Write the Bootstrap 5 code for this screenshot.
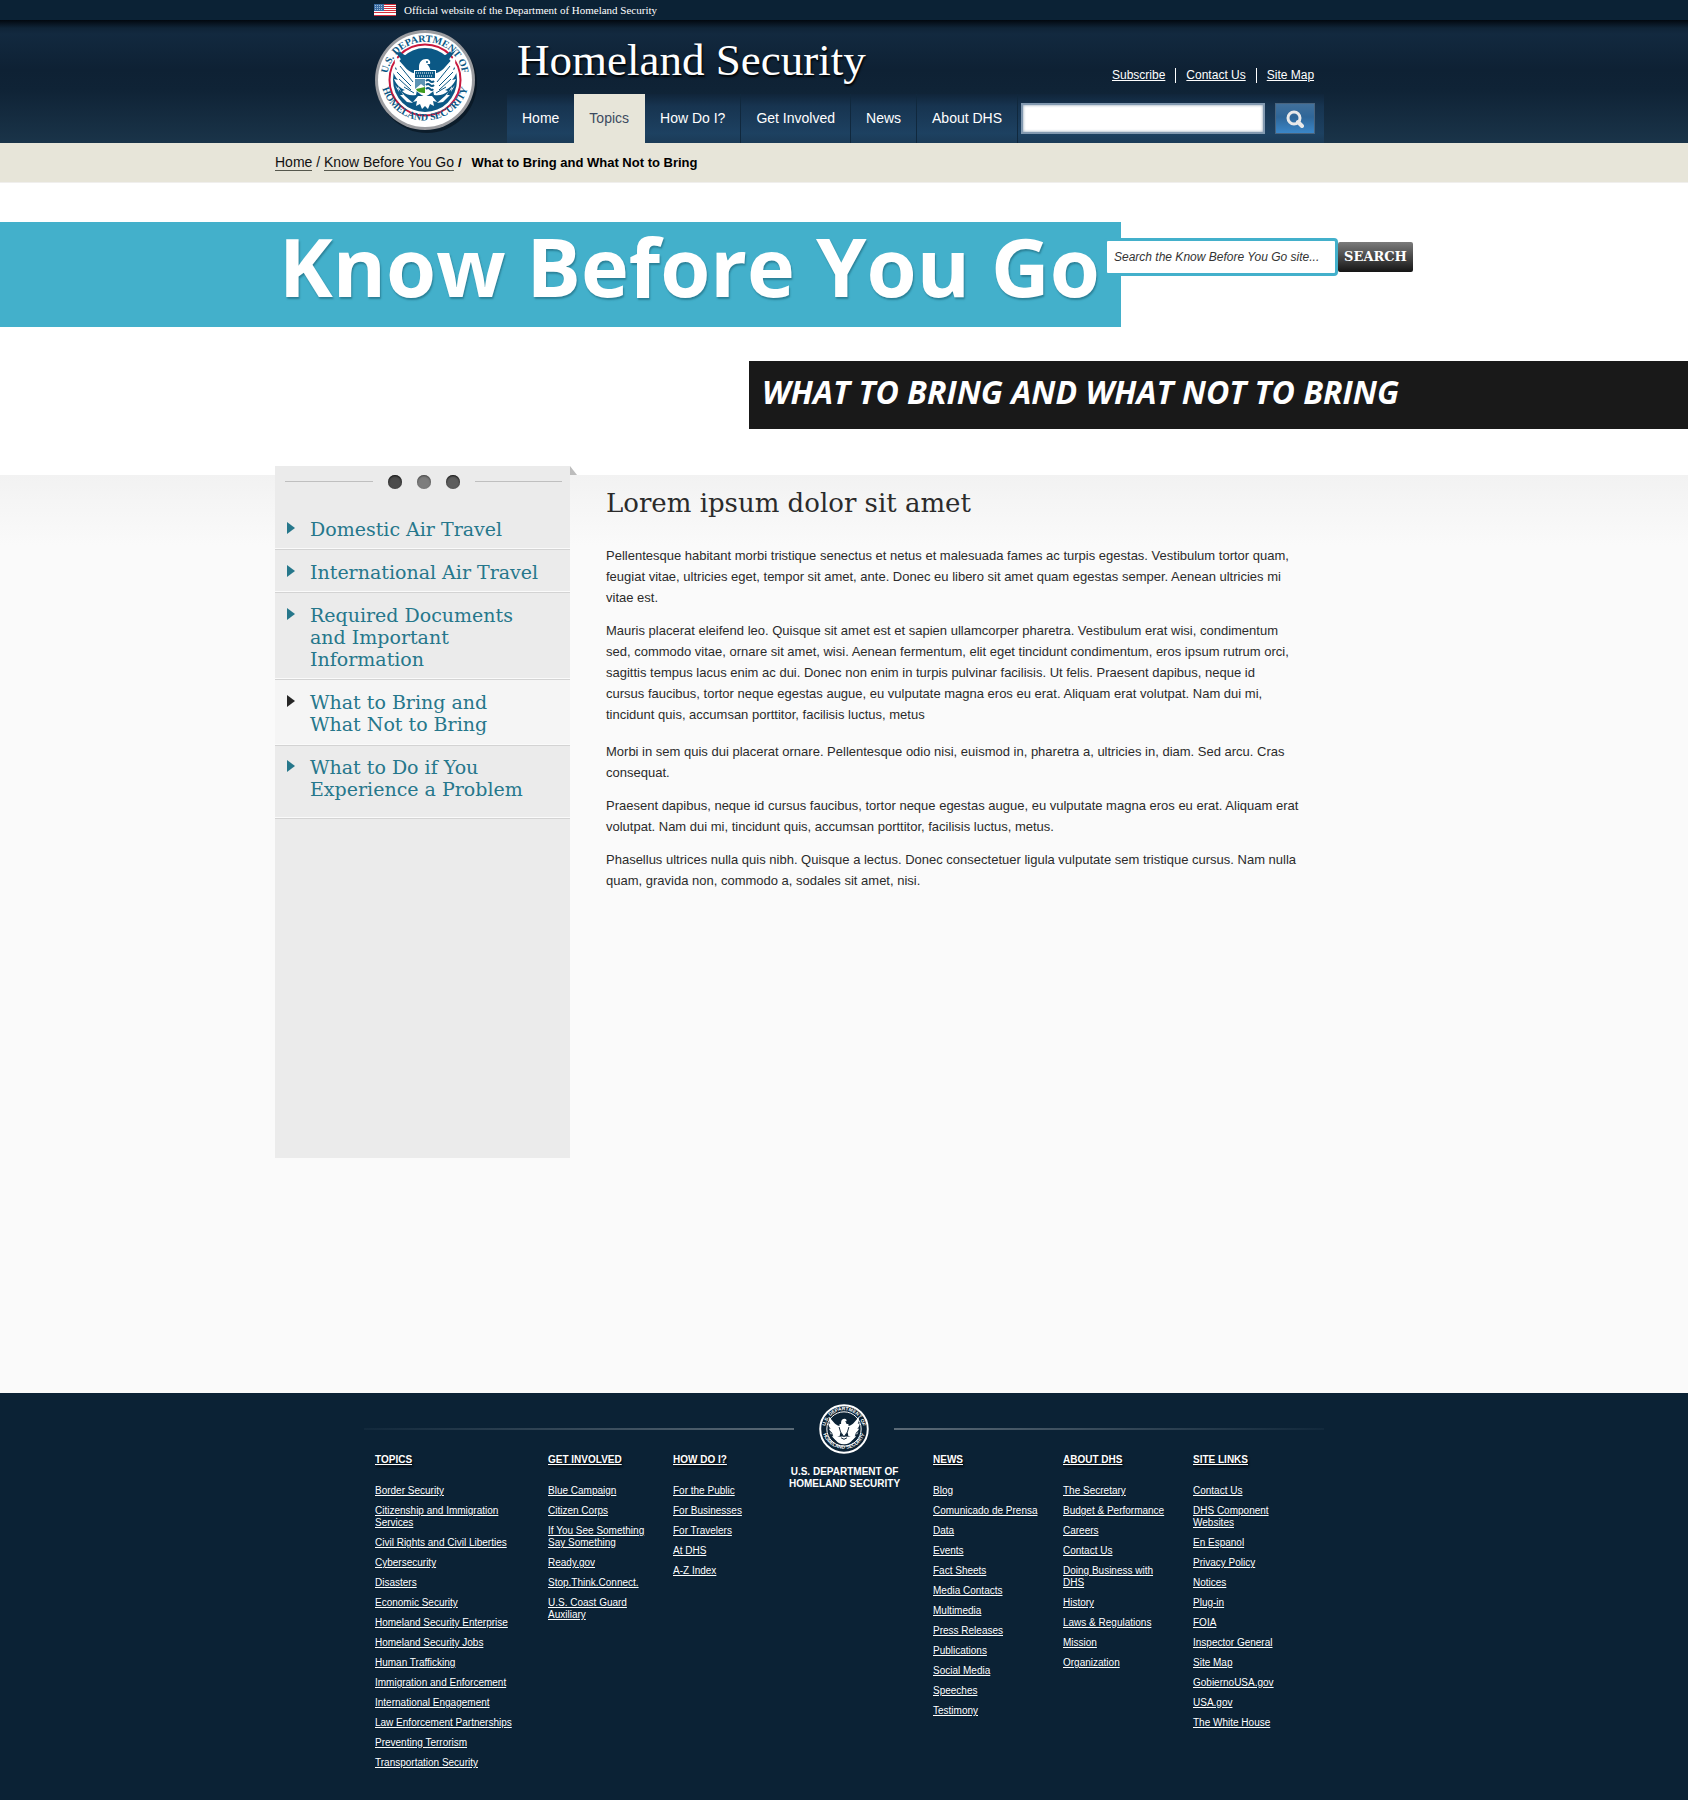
<!DOCTYPE html>
<html lang="en">
<head>
<meta charset="utf-8">
<meta name="viewport" content="width=device-width, initial-scale=1">
<title>What to Bring and What Not to Bring | Homeland Security</title>
<link href="https://cdn.jsdelivr.net/npm/bootstrap@5.3.0/dist/css/bootstrap.min.css" rel="stylesheet">
<style>
  :root { --navy: #0b2235; --sand: #e7e5d9; --aqua: #43b0cb; --link: #26778b; --slab: "DejaVu Serif", serif; }
  body { font-family: "Liberation Sans", Arial, sans-serif; font-size: 13px; line-height: 21px; color: #2b2b2b; background: #fff; }
  .shell { width: 100%; max-width: 960px; margin: 0 auto; }
  .wide-shell { width: 100%; max-width: 1138px; margin: 0 auto; }

  /* Official strip and masthead */
  .official { background: var(--navy); height: 20px; }
  .official p { font: 11px/20px "Liberation Serif", serif; color: #fff; padding-left: 10px; }
  .masthead { background: linear-gradient(#02080f 0, #0f2437 8px, #12293f 14px, #0e2134 50px, #0f2336 70px, #1a3449 100%); }
  .seal-link { width: 143px; padding: 9px 0 0 10px; }
  .site-name { font: 45px/54px "Liberation Serif", serif; color: #fff; padding-left: 10px; text-shadow: 1px 2px 2px #000; }
  .site-name a { color: inherit; text-decoration: none; }
  .brand-row { height: 74px; padding-top: 13px; }
  .util a { color: #fff; font-size: 12px; line-height: 15px; padding: 0 10px; display: block; border-left: 1px solid #fff; }
  .util li:first-child a { border-left: 0; }
  .util { margin: 35px 0 0; }
  .main-nav { min-height: 49px; background: linear-gradient(#10253a 0, #173450 12px, #1d4161 80%, #1b3b57 100%); }
  .main-nav .nav-link { font-size: 14px; line-height: 49px; padding: 0 15px; color: #fff; border-right: 1px solid #10283d; }
  .main-nav .nav-link.active { background: var(--sand); color: #3c4a60; border-color: var(--sand); }
  .site-search { padding: 9px 9px 9px 3px; gap: 10px; }
  .site-search input { width: 244px; height: 31px; border: 2px solid #8299b0; border-radius: 0; padding: 2px 6px; box-shadow: inset 0 0 3px #7d93a8; }
  .site-search button { width: 40px; height: 31px; border: 1px solid #49647e; border-radius: 0; padding: 0; background: linear-gradient(#41709b, #2f6698 45%, #3a86c8); }
  .site-search svg { display: block; margin: 0 auto; }

  /* Breadcrumb */
  .crumbs { background: var(--sand); border-bottom: 1px solid #f0efed; font-size: 14px; line-height: 38px; color: #111; }
  .crumbs a { color: #111; text-decoration: none; border-bottom: 1px solid #55574d; }
  .crumbs strong { font-size: 13px; color: #000; padding-left: 6px; }

  /* Section banners */
  .hero { margin-top: 39px; height: 105px; background: linear-gradient(to right, var(--aqua) calc(50% + 277px), transparent 0); }
  .hero h1 { font: bold 81px/88px "Open Sans", sans-serif; color: #fff; width: 829px; white-space: nowrap; text-shadow: 1px 2px 2px #2b8097; }
  .hero form { margin-top: 16px; }
  .hero input { width: 234px; height: 38px; border: 3px solid var(--aqua); border-radius: 4px; padding: 0 7px; font-size: 12px; font-style: italic; color: #333; }
  .hero input::placeholder { color: #333; opacity: 1; }
  .hero button { width: 75px; height: 30px; border: 0; border-radius: 2px; padding: 0; font: bold 13px/28px var(--slab); color: #fff; background: linear-gradient(#7b7b7b, #151515); }
  .subhero { margin: 34px 0 46px calc(50% - 95px); height: 68px; background: #191919; }
  .subhero h2 { font: italic bold 32px/62px "Open Sans", sans-serif; color: #fff; padding-left: 13px; white-space: nowrap; }

  /* Body */
  .page-body { background: linear-gradient(#f2f2f2, #fafafa 70px); min-height: 918px; }
  .side { position: relative; width: 295px; min-height: 692px; margin-top: -9px; background: #ebebeb; }
  .side::after { content: ""; position: absolute; left: 100%; top: 0; border-style: solid; border-width: 9px 0 0 7px; border-color: transparent transparent transparent #bdbdbd; }
  .dots { height: 31px; padding: 0 8px 0 10px; gap: 15px; }
  .dots i { flex: 1; height: 1px; background: #bfbfbf; }
  .dots b { width: 14px; height: 14px; border-radius: 50%; background: #4c4c4c; box-shadow: inset 0 1px 2px #111; }
  .dots b:nth-of-type(2) { background: #7d7d7d; box-shadow: inset 0 1px 2px #444; }
  .dots b:nth-of-type(3) { background: #5d5d5d; }
  .side ul { margin: 10px 0 0; }
  .side li { border-bottom: 1px solid #d3d3d3; box-shadow: inset 0 -1px #fafafa; }
  .side li a { display: flex; gap: 15px; padding: 11px 30px 9px 12px; font: 19px/22px var(--slab); color: var(--link); text-decoration: none; }
  .side li a::before { content: ""; flex: none; margin-top: 4px; height: 0; border-style: solid; border-width: 6px 0 6px 8px; border-color: transparent transparent transparent var(--link); }
  .side li.current { background: #f5f5f5; }
  .side li.current a { padding-bottom: 10px; }
  .side li.current a::before { border-left-color: #262626; }
  .side li.closing a { padding: 10px 30px 18px 12px; }
  .side .nw { white-space: nowrap; }
  .copy { max-width: 733px; padding: 10px 0 40px 36px; }
  .copy h3 { font: 26px/36px var(--slab); color: #2b2b2b; margin: 0 0 24px; }
  .copy p { margin: 0 0 12px; }
  .copy .break-after { margin-bottom: 16px; }

  /* Footer */
  .foot { background: var(--navy); min-height: 407px; padding: 11px 0 20px; }
  .rule { height: 2px; background: linear-gradient(to right, #12293c, #5b6a76); }
  .rule.flip { background: linear-gradient(to left, #12293c, #5b6a76); }
  .foot-seal { width: 100px; }
  .foot-cols { padding-left: 11px; font-size: 10px; line-height: 12px; }
  .foot-cols a { color: #fff; }
  .foot-cols h4 { font-size: 10px; font-weight: bold; line-height: 12px; margin: 0 0 19px; text-shadow: 1px 2px 2px #000; }
  .foot-cols li { margin-bottom: 8px; }
  .fc-topics { width: 173px; padding-right: 25px; }
  .fc-involved { width: 125px; padding-right: 15px; }
  .fc-how { width: 116px; }
  .fc-dept { width: 111px; margin-right: 33px; margin-top: 12px; color: #fff; font-weight: bold; text-align: center; white-space: nowrap; }
  .fc-right { width: 130px; padding-right: 25px; }
</style>
<script src="https://cdn.jsdelivr.net/npm/bootstrap@5.3.0/dist/js/bootstrap.bundle.min.js"></script>
</head>
<body>
<div class="official">
  <div class="shell">
    <p class="m-0 d-flex align-items-center">
      <svg class="me-2" width="22" height="12" viewBox="0 0 22 12" aria-hidden="true">
        <rect width="22" height="12" fill="#fff"/>
        <path d="M0 .5h22M0 2.5h22M0 4.5h22M0 6.5h22M0 8.5h22M0 11.5h22" stroke="#d22f3c"/>
        <rect width="10" height="7" fill="#3c6ea5"/>
        <path d="M1 1.500h8M1 3.500h8M1 5.500h8" stroke="#9dbbd8" stroke-dasharray="1 1"/>
      </svg>Official website of the Department of Homeland Security</p>
  </div>
</div>

<header class="masthead">
  <div class="shell d-flex">
    <a class="seal-link flex-shrink-0" href="#" aria-label="Department of Homeland Security">
      <svg width="106" height="106" viewBox="-1 -1 106 106" aria-hidden="true">
        <defs>
          <path id="arcTopWide" d="M12.500 56a38 38 0 1 1 75 0"/>
          <path id="arcLow" d="M5.500 46a44.500 44.500 0 1 0 89 0"/>
          <g id="eagle">
            <path d="M45 43C39 45 33 41 29 36C26 33 23 29 20 25C19 31 20 36 22 40L18 38C18 43 20 47 23 50L19 49C21 54 25 58 30 60L27 61C31 65 36 66 41 65L43 55Z"/>
            <path d="M55 43C61 45 67 41 71 36C74 33 77 29 80 25C81 31 80 36 78 40L82 38C82 43 80 47 77 50L81 49C79 54 75 58 70 60L73 61C69 65 64 66 59 65L57 55Z"/>
            <path d="M44 45V37C44 32 47 29 51 29C54 29 56 31 55 34L52 34C54 36 56 39 56 45Z"/>
            <path d="M43 66L38 72L42 71L41 76L45 74L47 79L50 76L53 79L55 74L59 76L58 71L62 72L57 66Z"/>
            <path d="M20 55L24 62L23 56L28 65L25 65L32 72L38 73L30 66Z M80 55L76 62L77 56L72 65L75 65L68 72L62 73L70 66Z"/>
          </g>
        </defs>
        <circle cx="52" cy="53" r="50" fill="#05101b" opacity=".6"/>
        <circle cx="50" cy="50" r="50" fill="#9b9ca0"/>
        <circle cx="50" cy="50" r="47" fill="#fff"/>
        <circle cx="50" cy="50" r="35.500" fill="none" stroke="#c8183c" stroke-width="2"/>
        <circle cx="50" cy="50" r="32" fill="#0b5885"/>
        <path d="M14 16L31 38L38 31L34 24C30 26 24 22 22 19C22 22 18 20 14 16Z M86 16L69 38L62 31L66 24C70 26 76 22 78 19C78 22 82 20 86 16Z" fill="#0b5885" transform="translate(5 4) scale(.9)"/>
        <use href="#eagle" fill="#fff"/>
        <path d="M25 36l13 16M22 42l14 14M24 49l12 11M29 57l10 6M75 36l-13 16M78 42l-14 14M76 49l-12 11M71 57l-10 6" stroke="#0b5885" stroke-width="1"/>
        <path d="M39 40H61V53C61 61 55 64 50 67C45 64 39 61 39 53Z" fill="#fff"/>
        <path d="M40 41H60V48H40Z" fill="#0b5885"/>
        <path d="M41 43h18M42 46h16" stroke="#fff" stroke-dasharray="1 1"/>
        <path d="M40 49H50V57L46 54L40 59Z" fill="#5c93b3"/>
        <path d="M41 59L50 57V63C46 63 42 62 41 59Z" fill="#3f9c1f"/>
        <path d="M51 51q2-2 4 0t4 0M51 55q2-2 4 0t4 0M51 59q2-2 4 0t3 0" fill="none" stroke="#0b5885" stroke-width="2"/>
        <circle cx="52" cy="32" r="1" fill="#0b5885"/>
        <g fill="#0b5885" font-family="Liberation Serif" font-weight="bold" font-size="10" text-anchor="middle">
          <text><textPath href="#arcTopWide" startOffset="50%">U.S. DEPARTMENT OF</textPath></text>
          <text><textPath href="#arcLow" startOffset="50%">HOMELAND SECURITY</textPath></text>
        </g>
      </svg>
    </a>
    <div class="flex-grow-1">
      <div class="brand-row d-flex justify-content-between align-items-start">
        <div class="site-name"><a href="#">Homeland Security</a></div>
        <ul class="util list-unstyled d-flex">
          <li><a href="#">Subscribe</a></li><li><a href="#">Contact Us</a></li><li><a href="#">Site Map</a></li>
        </ul>
      </div>
      <div class="main-nav d-flex justify-content-between">
        <nav class="nav flex-nowrap text-nowrap" aria-label="Main">
          <a class="nav-link border-0" href="#">Home</a>
          <a class="nav-link active" href="#">Topics</a>
          <a class="nav-link" href="#">How Do I?</a>
          <a class="nav-link" href="#">Get Involved</a>
          <a class="nav-link" href="#">News</a>
          <a class="nav-link" href="#">About DHS</a>
        </nav>
        <form class="site-search d-flex" role="search">
          <input type="search" aria-label="Search DHS">
          <button type="button" aria-label="Search">
            <svg width="18" height="18" viewBox="0 0 18 18" fill="none" stroke="#e9e9e9" aria-hidden="true"><circle cx="8" cy="8" r="6" stroke-width="3"/><path d="M12 12l4 4" stroke-width="4" stroke-linecap="round"/></svg>
          </button>
        </form>
      </div>
    </div>
  </div>
</header>

<nav class="crumbs" aria-label="Breadcrumb">
  <div class="wide-shell"><a href="#">Home</a> / <a href="#">Know Before You Go</a> <strong class="p-0">/</strong> <strong>What to Bring and What Not to Bring</strong></div>
</nav>

<main>
  <div class="hero">
    <div class="wide-shell d-flex justify-content-between align-items-start">
      <h1 class="m-0 ps-1">Know Before You Go</h1>
      <form class="d-flex align-items-center" role="search">
        <input type="text" placeholder="Search the Know Before You Go site..." aria-label="Search the Know Before You Go site">
        <button type="button">SEARCH</button>
      </form>
    </div>
  </div>
  <div class="subhero"><h2 class="m-0">WHAT TO BRING AND WHAT NOT TO BRING</h2></div>

  <div class="page-body">
    <div class="wide-shell d-flex align-items-start">
      <aside class="side flex-shrink-0">
        <div class="dots d-flex align-items-center"><i></i><b></b><b></b><b></b><i></i></div>
        <ul class="list-unstyled">
          <li><a href="#">Domestic Air Travel</a></li>
          <li><a href="#"><span class="nw">International Air Travel</span></a></li>
          <li><a href="#"><span>Required Documents<br>and Important<br>Information</span></a></li>
          <li class="current"><a href="#" aria-current="page"><span>What to Bring and<br>What Not to Bring</span></a></li>
          <li class="closing"><a href="#"><span class="nw">What to Do if You<br>Experience a Problem</span></a></li>
        </ul>
      </aside>
      <article class="copy">
        <h3>Lorem ipsum dolor sit amet</h3>
        <p>Pellentesque habitant morbi tristique senectus et netus et malesuada fames ac turpis egestas. Vestibulum tortor quam, feugiat vitae, ultricies eget, tempor sit amet, ante. Donec eu libero sit amet quam egestas semper. Aenean ultricies mi vitae est.</p>
        <p class="break-after">Mauris placerat eleifend leo. Quisque sit amet est et sapien ullamcorper pharetra. Vestibulum erat wisi, condimentum sed, commodo vitae, ornare sit amet, wisi. Aenean fermentum, elit eget tincidunt condimentum, eros ipsum rutrum orci, sagittis tempus lacus enim ac dui. Donec non enim in turpis pulvinar facilisis. Ut felis. Praesent dapibus, neque id<br>cursus faucibus, tortor neque egestas augue, eu vulputate magna eros eu erat. Aliquam erat volutpat. Nam dui mi, tincidunt quis, accumsan porttitor, facilisis luctus, metus</p>
        <p>Morbi in sem quis dui placerat ornare. Pellentesque odio nisi, euismod in, pharetra a, ultricies in, diam. Sed arcu. Cras consequat.</p>
        <p>Praesent dapibus, neque id cursus faucibus, tortor neque egestas augue, eu vulputate magna eros eu erat. Aliquam erat volutpat. Nam dui mi, tincidunt quis, accumsan porttitor, facilisis luctus, metus.</p>
        <p>Phasellus ultrices nulla quis nibh. Quisque a lectus. Donec consectetuer ligula vulputate sem tristique cursus. Nam nulla quam, gravida non, commodo a, sodales sit amet, nisi.</p>
      </article>
    </div>
  </div>
</main>

<footer class="foot">
  <div class="shell">
    <div class="d-flex align-items-center">
      <div class="rule flex-grow-1"></div>
      <div class="foot-seal d-flex justify-content-center">
        <svg width="50" height="50" viewBox="-1 -1 102 102" aria-hidden="true">
          <circle cx="50" cy="50" r="48.500" fill="#0b2235" stroke="#fff" stroke-width="4"/>
          <circle cx="50" cy="50" r="35" fill="none" stroke="#fff" stroke-width="2"/>
          <use href="#eagle" fill="#fff"/>
          <path d="M41 40H59V55L50 66L41 55Z M24 50Q30 82 50 81Q70 82 76 50L62 66H38Z" fill="#fff"/>
          <path d="M40 46l3 10 7 10 7-10 3-10M44 68l6 3 6-3" fill="none" stroke="#0b2235" stroke-width="2"/>
          <g fill="#fff" font-family="Liberation Sans" font-weight="bold" font-size="10" text-anchor="middle">
            <text><textPath href="#arcTopWide" startOffset="50%">U.S. DEPARTMENT OF</textPath></text>
            <text><textPath href="#arcLow" startOffset="50%">HOMELAND SECURITY</textPath></text>
          </g>
        </svg>
      </div>
      <div class="rule flip flex-grow-1"></div>
    </div>
    <div class="foot-cols d-flex">
      <section class="fc-topics flex-shrink-0">
        <h4><a href="#">TOPICS</a></h4>
        <ul class="list-unstyled m-0">
          <li><a href="#">Border Security</a></li><li><a href="#">Citizenship and Immigration Services</a></li><li><a href="#">Civil Rights and Civil Liberties</a></li><li><a href="#">Cybersecurity</a></li><li><a href="#">Disasters</a></li><li><a href="#">Economic Security</a></li><li><a href="#">Homeland Security Enterprise</a></li><li><a href="#">Homeland Security Jobs</a></li><li><a href="#">Human Trafficking</a></li><li><a href="#">Immigration and Enforcement</a></li><li><a href="#">International Engagement</a></li><li><a href="#">Law Enforcement Partnerships</a></li><li><a href="#">Preventing Terrorism</a></li><li><a href="#">Transportation Security</a></li>
        </ul>
      </section>
      <section class="fc-involved">
        <h4><a href="#">GET INVOLVED</a></h4>
        <ul class="list-unstyled m-0">
          <li><a href="#">Blue Campaign</a></li><li><a href="#">Citizen Corps</a></li><li><a href="#">If You See Something Say Something</a></li><li><a href="#">Ready.gov</a></li><li><a href="#">Stop.Think.Connect.</a></li><li><a href="#">U.S. Coast Guard Auxiliary</a></li>
        </ul>
      </section>
      <section class="fc-how">
        <h4><a href="#">HOW DO I?</a></h4>
        <ul class="list-unstyled m-0">
          <li><a href="#">For the Public</a></li><li><a href="#">For Businesses</a></li><li><a href="#">For Travelers</a></li><li><a href="#">At DHS</a></li><li><a href="#">A-Z Index</a></li>
        </ul>
      </section>
      <div class="fc-dept">U.S. DEPARTMENT OF<br>HOMELAND SECURITY</div>
      <section class="fc-right">
        <h4><a href="#">NEWS</a></h4>
        <ul class="list-unstyled m-0">
          <li><a href="#">Blog</a></li><li><a href="#">Comunicado de Prensa</a></li><li><a href="#">Data</a></li><li><a href="#">Events</a></li><li><a href="#">Fact Sheets</a></li><li><a href="#">Media Contacts</a></li><li><a href="#">Multimedia</a></li><li><a href="#">Press Releases</a></li><li><a href="#">Publications</a></li><li><a href="#">Social Media</a></li><li><a href="#">Speeches</a></li><li><a href="#">Testimony</a></li>
        </ul>
      </section>
      <section class="fc-right">
        <h4><a href="#">ABOUT DHS</a></h4>
        <ul class="list-unstyled m-0">
          <li><a href="#">The Secretary</a></li><li><a href="#">Budget &amp; Performance</a></li><li><a href="#">Careers</a></li><li><a href="#">Contact Us</a></li><li><a href="#">Doing Business with DHS</a></li><li><a href="#">History</a></li><li><a href="#">Laws &amp; Regulations</a></li><li><a href="#">Mission</a></li><li><a href="#">Organization</a></li>
        </ul>
      </section>
      <section class="fc-right">
        <h4><a href="#">SITE LINKS</a></h4>
        <ul class="list-unstyled m-0">
          <li><a href="#">Contact Us</a></li><li><a href="#">DHS Component Websites</a></li><li><a href="#">En Espanol</a></li><li><a href="#">Privacy Policy</a></li><li><a href="#">Notices</a></li><li><a href="#">Plug-in</a></li><li><a href="#">FOIA</a></li><li><a href="#">Inspector General</a></li><li><a href="#">Site Map</a></li><li><a href="#">GobiernoUSA.gov</a></li><li><a href="#">USA.gov</a></li><li><a href="#">The White House</a></li>
        </ul>
      </section>
    </div>
  </div>
</footer>
</body>
</html>
